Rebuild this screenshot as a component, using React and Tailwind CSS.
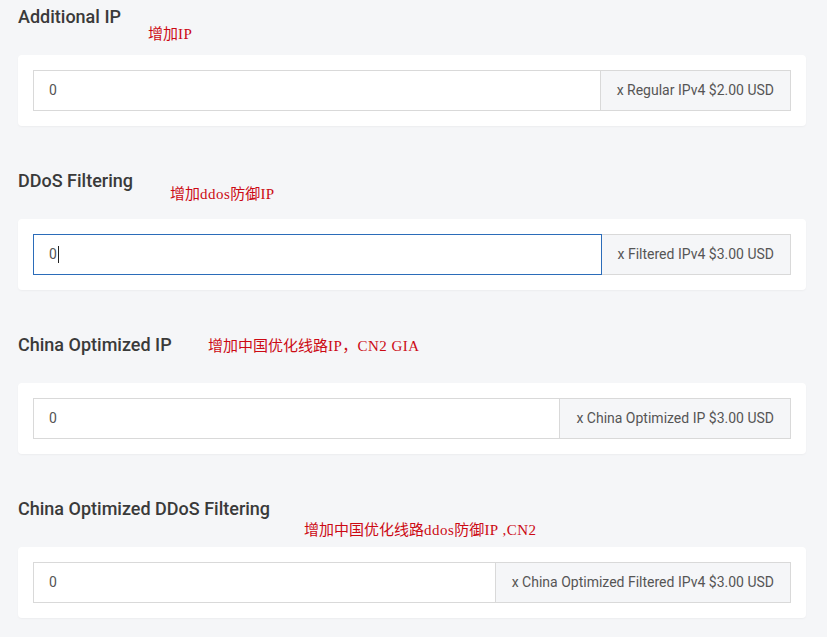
import React from "react";

const sections = [
  {
    title: "Additional IP",
    addon: "x Regular IPv4 $2.00 USD",
    note: [["c", "增加"], ["l", "IP"]],
    noteLeft: 130,
    noteTop: 21,
  },
  {
    title: "DDoS Filtering",
    addon: "x Filtered IPv4 $3.00 USD",
    note: [["c", "增加"], ["l", "ddos"], ["c", "防御"], ["l", "IP"]],
    noteLeft: 152,
    noteTop: 17,
    focused: true,
  },
  {
    title: "China Optimized IP",
    addon: "x China Optimized IP $3.00 USD",
    note: [["c", "增加中国优化线路"], ["l", "IP"], ["c", "，"], ["l", "CN2 GIA"]],
    noteLeft: 190,
    noteTop: 5,
  },
  {
    title: "China Optimized DDoS Filtering",
    addon: "x China Optimized Filtered IPv4 $3.00 USD",
    note: [["c", "增加中国优化线路"], ["l", "ddos"], ["c", "防御"], ["l", "IP ,CN2"]],
    noteLeft: 286,
    noteTop: 25,
  },
];

function Note({ parts, left, top }) {
  return (
    <div
      className="absolute whitespace-pre text-[15px] leading-[16px] text-[#cc0a14]"
      style={{ left, top }}
    >
      {parts.map(([k, t], i) =>
        k === "c" ? (
          <span key={i} className="font-['Noto_Sans_CJK_SC',sans-serif]">
            {t}
          </span>
        ) : (
          <span
            key={i}
            className="font-['Liberation_Serif',serif] tracking-[0.5px]"
          >
            {t}
          </span>
        )
      )}
    </div>
  );
}

export default function App() {
  return (
    <div className="min-h-[637px] w-[827px] bg-[#f5f6f8] px-[18px] pt-[4px] font-['Roboto',sans-serif]">
      <div className="flex w-[788px] flex-col gap-[42px]">
        {sections.map((s, i) => (
          <div key={i} className="relative">
            <h3 className="m-0 pt-[1px] text-[18px] font-medium leading-[24px] text-[#3a3a3a]">
              {s.title}
            </h3>
            <Note parts={s.note} left={s.noteLeft} top={s.noteTop} />
            <div className="mt-[26px] rounded-[4px] bg-white p-[15px] shadow-[0_1px_2px_rgba(0,0,0,0.04)]">
              <div className="flex h-[41px]">
                {s.focused ? (
                  <div className="flex flex-1 items-center border border-solid border-[#2b6cb9] pl-[15px] text-[14px] text-[#555]">
                    <span>0</span>
                    <span className="ml-[1px] inline-block h-[17px] w-[1px] bg-[#222]" />
                  </div>
                ) : (
                  <div className="flex flex-1 items-center border border-solid border-[#d9d9d9] pl-[15px] text-[14px] text-[#555]">
                    <span>0</span>
                  </div>
                )}
                <div className="flex items-center whitespace-nowrap border border-l-0 border-solid border-[#d9d9d9] bg-[#f5f6f8] px-[16px] text-[14px] text-[#555]">
                  {s.addon}
                </div>
              </div>
            </div>
          </div>
        ))}
      </div>
    </div>
  );
}
